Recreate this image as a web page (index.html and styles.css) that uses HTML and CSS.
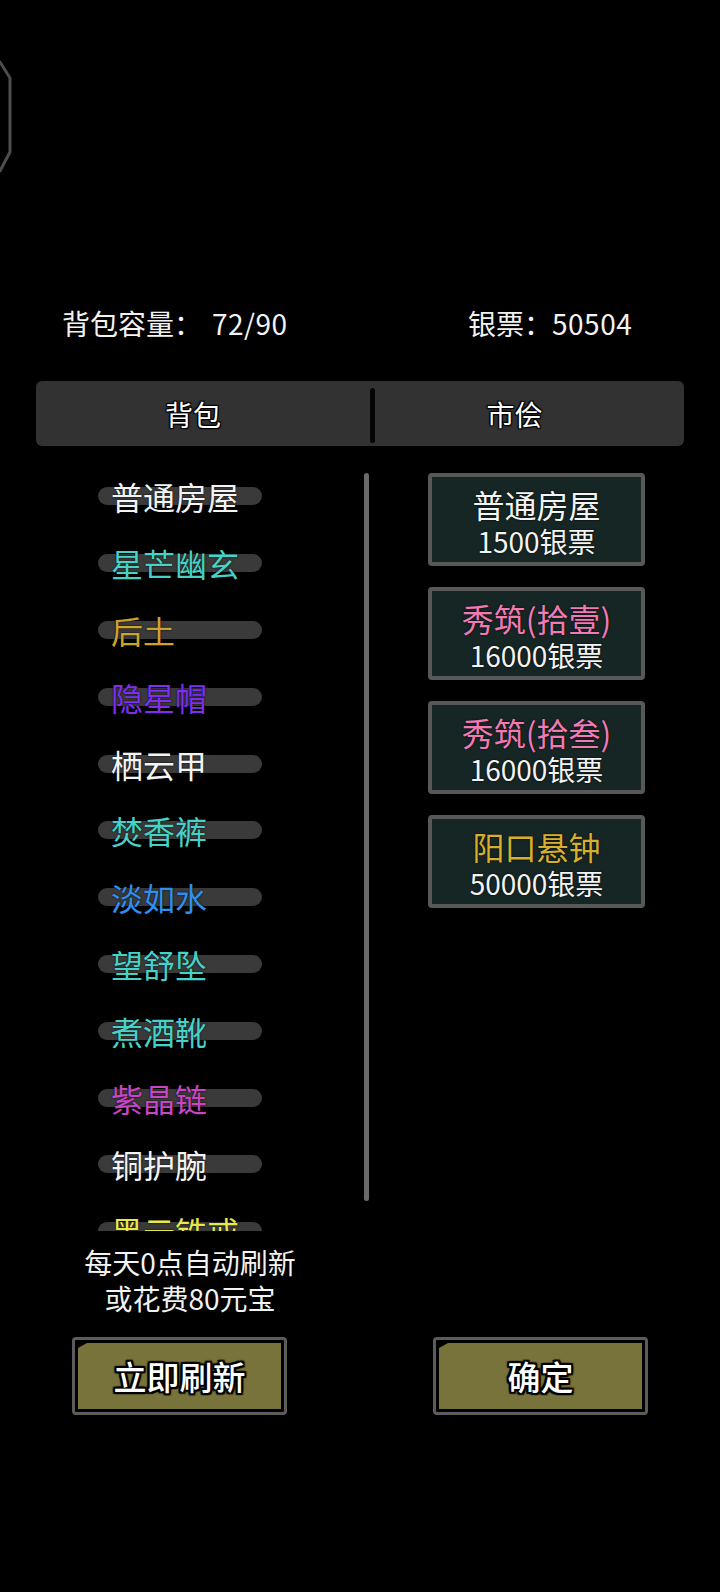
FILE: index.html
```html
<!DOCTYPE html>
<html lang="zh-CN">
<head>
<meta charset="utf-8">
<title>市侩</title>
<link rel="stylesheet" href="styles.css">
</head>
<body>
<div class="page">
  <div class="top">
    <svg class="deco" width="14" height="116" viewBox="0 0 14 116">
      <path d="M-6 2 L0 3 L10 19 L10 93 L0 112 L-6 113" fill="none" stroke="#4d4d4d" stroke-width="3" stroke-linejoin="round"/>
    </svg>
  </div>

  <div class="stats">
    <div class="stat cap">背包容量：<span class="num gap">72/90</span></div>
    <div class="stat money">银票：<span class="num">50504</span></div>
  </div>

  <div class="tabs">
    <div class="tab tab-left">背包</div>
    <div class="tab-div"></div>
    <div class="tab tab-right">市侩</div>
  </div>

  <div class="content">
    <div class="list">
      <div class="row"><div class="pill c-white">普通房屋</div></div>
      <div class="row"><div class="pill c-cyan">星芒幽玄</div></div>
      <div class="row"><div class="pill c-gold">后土</div></div>
      <div class="row"><div class="pill c-purple">隐星帽</div></div>
      <div class="row"><div class="pill c-white">栖云甲</div></div>
      <div class="row"><div class="pill c-cyan">焚香裤</div></div>
      <div class="row"><div class="pill c-blue">淡如水</div></div>
      <div class="row"><div class="pill c-cyan">望舒坠</div></div>
      <div class="row"><div class="pill c-cyan">煮酒靴</div></div>
      <div class="row"><div class="pill c-magenta">紫晶链</div></div>
      <div class="row"><div class="pill c-white">铜护腕</div></div>
      <div class="row"><div class="pill c-yellow">黑云铁戒</div></div>
    </div>
    <div class="scrollbar"></div>
    <div class="market">
      <div class="card"><div class="card-title c-white">普通房屋</div><div class="card-price">1500银票</div></div>
      <div class="card"><div class="card-title c-pink">秀筑(拾壹)</div><div class="card-price">16000银票</div></div>
      <div class="card"><div class="card-title c-pink">秀筑(拾叁)</div><div class="card-price">16000银票</div></div>
      <div class="card"><div class="card-title c-gold2">阳口悬钟</div><div class="card-price">50000银票</div></div>
    </div>
  </div>

  <div class="note">
    <div class="note-line">每天0点自动刷新</div>
    <div class="note-line">或花费80元宝</div>
  </div>

  <div class="buttons">
    <div class="btn btn-left"><div class="btn-fill">立即刷新</div></div>
    <div class="btn btn-right"><div class="btn-fill">确定</div></div>
  </div>
</div>
</body>
</html>
```

FILE: styles.css
```css
html, body {
  margin: 0;
  padding: 0;
  background: #000;
}
body {
  font-family: "Noto Sans CJK SC", "Noto Sans", sans-serif;
  color: #fff;
}
.page {
  width: 720px;
  height: 1592px;
  overflow: hidden;
  background: #000;
}
.top {
  height: 306px;
  padding-top: 59px;
  box-sizing: border-box;
}
.deco {
  display: block;
}
.stats {
  display: flex;
  height: 34px;
  font-size: 28px;
  line-height: 34px;
  color: #f2f2f2;
}
.cap {
  padding-left: 62px;
  width: 406px;
}
.gap {
  margin-left: 10px;
  letter-spacing: 0.5px;
}
.money .num {
  letter-spacing: 0.5px;
}
.tabs {
  margin: 41px 36px 0 36px;
  height: 65px;
  background: #323232;
  border-radius: 6px;
  display: flex;
  align-items: center;
}
.tab {
  font-size: 28px;
  color: #fff;
  text-shadow: 0 0 2px #000, 1px 1px 1px #000, -1px -1px 1px #000, 1px -1px 1px #000, -1px 1px 1px #000;
  text-align: center;
}
.tab-left {
  width: 314px;
}
.tab-div {
  width: 5px;
  height: 55px;
  margin-left: 20px;
  margin-top: 3px;
  border-radius: 3px;
  background: #050505;
}
.tab-right {
  flex: 1;
  padding-right: 30px;
}
.content {
  margin-top: 17px;
  height: 768px;
  display: flex;
}
.list {
  width: 364px;
  height: 768px;
  overflow: hidden;
}
.row {
  height: 66.8px;
  display: flex;
  align-items: center;
  padding-left: 98px;
}
.pill {
  width: 151px;
  height: 18px;
  padding-left: 13px;
  border-radius: 9px;
  background: #3a3a3a;
  font-size: 32px;
  line-height: 18px;
  white-space: nowrap;
  display: flex;
  align-items: center;
  text-shadow: 0 0 2px #000;
}
.c-white { color: #f4f4f4; }
.c-cyan { color: #46d2c8; }
.c-gold { color: #cfa22c; }
.c-purple { color: #7d2ef0; }
.c-blue { color: #2f8ff0; }
.c-magenta { color: #c845c6; }
.c-yellow { color: #e6e84c; }
.c-pink { color: #f07ab4; }
.c-gold2 { color: #d8ae2e; }
.scrollbar {
  width: 5px;
  height: 728px;
  margin-top: 10px;
  border-radius: 3px;
  background: #6a6a6a;
}
.market {
  margin-left: 59px;
  padding-top: 10px;
  display: flex;
  flex-direction: column;
  gap: 21px;
}
.card {
  width: 209px;
  height: 85px;
  border: 4px solid #585858;
  border-radius: 4px;
  background: #162624;
  display: flex;
  flex-direction: column;
  align-items: center;
  box-sizing: content-box;
}
.card-title {
  font-size: 32px;
  line-height: 36px;
  margin-top: 9px;
  text-shadow: 0 0 2px #000;
}
.card-price {
  font-size: 28px;
  line-height: 32px;
  margin-top: 3px;
  color: #f4f4f4;
  text-shadow: 0 0 2px #000;
}
.note {
  width: 380px;
  margin-top: 13px;
  text-align: center;
  font-size: 28px;
  color: #f2f2f2;
}
.note-line {
  height: 36px;
  line-height: 36px;
}
.buttons {
  margin-top: 21px;
  display: flex;
  padding-left: 72px;
}
.btn {
  width: 215px;
  height: 78px;
  border: 3px solid #5c5c5c;
  border-radius: 4px;
  padding: 3px;
  box-sizing: border-box;
  background: #000;
}
.btn-right {
  margin-left: 146px;
}
.btn-fill {
  height: 100%;
  background: #77733a;
  clip-path: polygon(9px 0, 100% 0, 100% 100%, 0 100%, 0 5px);
  display: flex;
  align-items: center;
  justify-content: center;
  font-size: 33px;
  font-weight: 500;
  color: #fff;
  text-shadow: 0 0 2px #000, 2px 2px 1px #000, -2px -2px 1px #000, 2px -2px 1px #000, -2px 2px 1px #000, 0 2px 1px #000, 0 -2px 1px #000, 2px 0 1px #000, -2px 0 1px #000;
}
```
